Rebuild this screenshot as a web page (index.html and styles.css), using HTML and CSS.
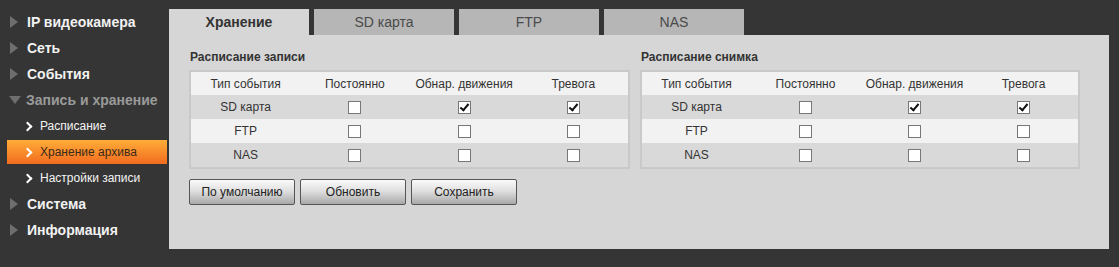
FILE: index.html
```html
<!DOCTYPE html>
<html lang="ru">
<head>
<meta charset="utf-8">
<title>Хранение архива</title>
<link rel="stylesheet" href="styles.css">
</head>
<body>
<div class="page">
  <nav class="side">
    <div class="mi"><span class="tri"></span>IP видеокамера</div>
    <div class="mi"><span class="tri"></span>Сеть</div>
    <div class="mi"><span class="tri"></span>События</div>
    <div class="mi open"><span class="tri down"></span>Запись и хранение</div>
    <div class="si"><span class="chev"></span>Расписание</div>
    <div class="si active"><span class="chev"></span>Хранение архива</div>
    <div class="si"><span class="chev"></span>Настройки записи</div>
    <div class="mi"><span class="tri"></span>Система</div>
    <div class="mi"><span class="tri"></span>Информация</div>
  </nav>
  <main class="main">
    <div class="tabs">
      <div class="tab active">Хранение</div>
      <div class="tab">SD карта</div>
      <div class="tab">FTP</div>
      <div class="tab">NAS</div>
    </div>
    <div class="panel">
      <div class="groups">
        <section class="group">
          <h3 class="gtitle">Расписание записи</h3>
          <div class="box">
            <div class="row head"><span>Тип события</span><span>Постоянно</span><span>Обнар. движения</span><span>Тревога</span></div>
            <div class="row dark"><span>SD карта</span><span><i class="cb"></i></span><span><i class="cb on"></i></span><span><i class="cb on"></i></span></div>
            <div class="row"><span>FTP</span><span><i class="cb"></i></span><span><i class="cb"></i></span><span><i class="cb"></i></span></div>
            <div class="row dark"><span>NAS</span><span><i class="cb"></i></span><span><i class="cb"></i></span><span><i class="cb"></i></span></div>
          </div>
        </section>
        <section class="group">
          <h3 class="gtitle">Расписание снимка</h3>
          <div class="box">
            <div class="row head"><span>Тип события</span><span>Постоянно</span><span>Обнар. движения</span><span>Тревога</span></div>
            <div class="row dark"><span>SD карта</span><span><i class="cb"></i></span><span><i class="cb on"></i></span><span><i class="cb on"></i></span></div>
            <div class="row"><span>FTP</span><span><i class="cb"></i></span><span><i class="cb"></i></span><span><i class="cb"></i></span></div>
            <div class="row dark"><span>NAS</span><span><i class="cb"></i></span><span><i class="cb"></i></span><span><i class="cb"></i></span></div>
          </div>
        </section>
      </div>
      <div class="buttons">
        <button class="btn">По умолчанию</button>
        <button class="btn">Обновить</button>
        <button class="btn">Сохранить</button>
      </div>
    </div>
  </main>
</div>
</body>
</html>
```

FILE: styles.css
```css
html, body {
  margin: 0;
  padding: 0;
  background: #353535;
  font-family: "Liberation Sans", Arial, sans-serif;
}
.page {
  display: flex;
  width: 1119px;
  height: 267px;
}
.side {
  width: 169px;
  padding-top: 9px;
  box-sizing: border-box;
  display: flex;
  flex-direction: column;
}
.mi {
  height: 26px;
  display: flex;
  align-items: center;
  font-size: 14px;
  font-weight: bold;
  color: #f2f2f2;
  padding-left: 10px;
}
.mi.open {
  color: #9a9a9a;
}
.tri {
  width: 0;
  height: 0;
  border-top: 6px solid transparent;
  border-bottom: 6px solid transparent;
  border-left: 8px solid #6e6e6e;
  margin-right: 9px;
}
.tri.down {
  border-left: 6px solid transparent;
  border-right: 6px solid transparent;
  border-top: 8px solid #6e6e6e;
  border-bottom: 0;
  margin-right: 5px;
  margin-left: -1px;
}
.si {
  height: 24px;
  margin: 1px 0 1px 7px;
  width: 160px;
  display: flex;
  align-items: center;
  font-size: 12px;
  color: #f4f4f4;
  padding-left: 17px;
  box-sizing: border-box;
}
.si.active {
  background: linear-gradient(#ffad38, #f26b1f);
  color: #3a2a1a;
}
.chev {
  width: 5px;
  height: 5px;
  border-right: 2px solid #fff;
  border-top: 2px solid #fff;
  transform: rotate(45deg);
  margin-right: 9px;
}
.main {
  width: 940px;
  padding-top: 9px;
}
.tabs {
  display: flex;
  gap: 5px;
}
.tab {
  width: 140px;
  height: 26px;
  background: #b6b6b6;
  color: #4a4a4a;
  font-size: 14px;
  display: flex;
  align-items: center;
  justify-content: center;
}
.tab.active {
  background: #d6d6d6;
  color: #333;
  font-weight: bold;
}
.panel {
  background: #d6d6d6;
  height: 214px;
  padding: 15px 0 0 20px;
  box-sizing: border-box;
}
.groups {
  display: flex;
  gap: 10px;
}
.group {
  width: 441px;
}
.group + .group {
  width: 440px;
}
.gtitle {
  margin: 0 0 6px 1px;
  font-size: 12px;
  font-weight: bold;
  color: #333;
  height: 14px;
  line-height: 14px;
}
.box {
  border: 2px solid #c9c9c9;
}
.row {
  display: grid;
  grid-template-columns: repeat(4, 1fr);
  height: 24px;
  align-items: center;
  background: #f2f2f2;
  font-size: 12px;
  color: #333;
}
.row.head {
  height: 23px;
}
.row.dark {
  background: #d9d9d9;
}
.row span {
  display: flex;
  justify-content: center;
  align-items: center;
}
.cb {
  width: 11px;
  height: 11px;
  border: 1px solid #777;
  background: #fff;
  position: relative;
  display: block;
}
.cb.on::after {
  content: "";
  position: absolute;
  left: 3px;
  top: 0px;
  width: 3px;
  height: 7px;
  border-right: 2px solid #111;
  border-bottom: 2px solid #111;
  transform: rotate(40deg);
}
.buttons {
  display: flex;
  gap: 5px;
  margin-top: 10px;
}
.btn {
  width: 106px;
  height: 26px;
  border: 1px solid #555;
  border-radius: 2px;
  background: linear-gradient(#fafafa, #e0e0e0 45%, #a8a8a8);
  font-family: "Liberation Sans", Arial, sans-serif;
  font-size: 12px;
  color: #222;
  padding: 0;
}
```
